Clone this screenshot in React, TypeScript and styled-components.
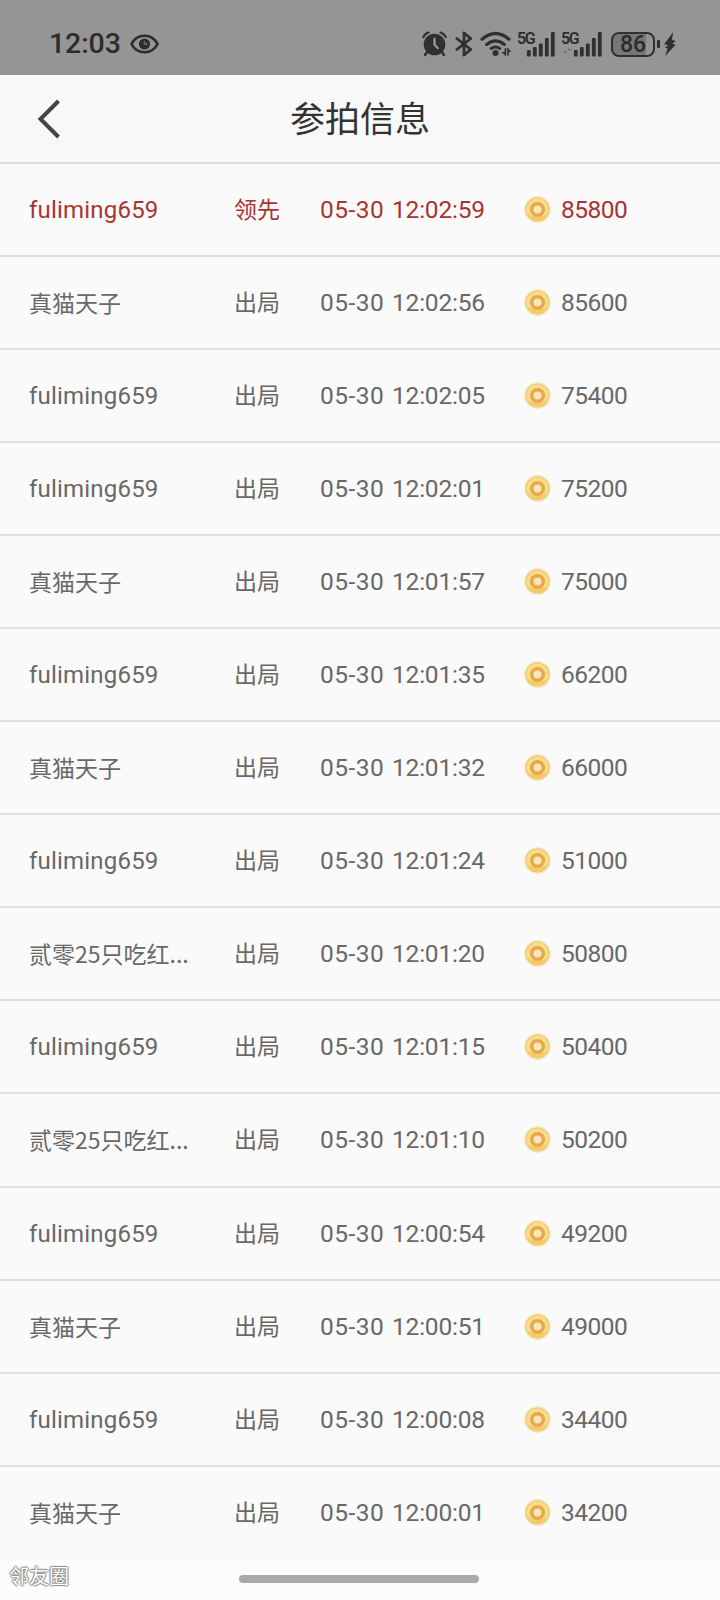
import React from 'react';
import styled, { createGlobalStyle } from 'styled-components';

const GlobalStyle = createGlobalStyle`
  * { box-sizing: border-box; }
  body {
    margin: 0;
    background: #fbfbfb;
    font-family: Roboto, "Noto Sans CJK SC", sans-serif;
  }
`;

const Screen = styled.div`
  width: 720px;
  height: 1600px;
  display: flex;
  flex-direction: column;
  background: #fafafa;
  overflow: hidden;
`;

const StatusBar = styled.header`
  height: 75.4px;
  flex: none;
  display: flex;
  align-items: center;
  padding: 13px 44px 0 49px;
  background: #959595;
  color: #2c2c2c;
`;

const Clock = styled.span`
  width: 81px;
  font-size: 28.5px;
  line-height: 34px;
  font-weight: 500;
  letter-spacing: -0.1px;
  white-space: nowrap;
`;

const StatusIcons = styled.div`
  display: flex;
  align-items: center;
  margin-left: auto;
`;

const Glyph = styled.svg<{ $gap?: number }>`
  display: block;
  flex: none;
  margin-left: ${(p) => p.$gap ?? 0}px;
`;

const Signal = styled.div<{ $gap: number }>`
  position: relative;
  width: 40px;
  height: 30px;
  margin-left: ${(p) => p.$gap}px;
`;

const SignalLabel = styled.span`
  position: absolute;
  left: -1px;
  top: 2px;
  font-size: 16px;
  line-height: 15px;
  font-weight: 600;
  letter-spacing: -1.4px;
`;

const Battery = styled.div`
  width: 44px;
  height: 25px;
  margin-left: 9px;
  border: 2px solid #303030;
  border-radius: 8px;
  background: linear-gradient(90deg, #777 82%, #959595 82%);
  font-size: 23px;
  line-height: 22px;
  font-weight: 500;
  letter-spacing: 0;
  text-align: center;
`;

const BatteryTip = styled.i`
  width: 3px;
  height: 8px;
  margin-left: 2px;
  border-radius: 1px;
  background: #303030;
`;

const TitleBar = styled.nav`
  height: 88.6px;
  flex: none;
  display: grid;
  grid-template-columns: 100px 1fr 100px;
  align-items: center;
  background: #f8f8f8;
  border-bottom: 2px solid #dedede;
`;

const BackButton = styled.button`
  width: 60px;
  height: 60px;
  margin-left: 19px;
  padding: 0;
  border: 0;
  background: none;
  display: grid;
  place-items: center;
`;

const Title = styled.h1`
  margin: 0;
  padding-top: 5px;
  font-size: 35px;
  line-height: 50px;
  font-weight: 400;
  color: #333;
  text-align: center;
`;

const BidList = styled.ul`
  margin: 0;
  padding: 0;
  list-style: none;
  flex: none;
`;

const BidRow = styled.li<{ $leading: boolean }>`
  height: 93.06px;
  display: grid;
  grid-template-columns: 205px 86px 204px 1fr;
  align-items: center;
  padding: 1px 0 0 29px;
  font-size: 23px;
  line-height: 34px;
  white-space: nowrap;
  color: ${(p) => (p.$leading ? '#a83432' : '#686868')};
  border-bottom: 2px solid #e1e1e1;
  &:last-child { border-bottom-color: transparent; }
`;

const Bidder = styled.span<{ $latin: boolean }>`
  font-family: ${(p) => (p.$latin ? 'Roboto' : '"Noto Sans CJK SC"')}, sans-serif;
  font-size: ${(p) => (p.$latin ? 24 : 23)}px;
  line-height: ${(p) => (p.$latin ? 34 : 32)}px;
  padding-bottom: ${(p) => (p.$latin ? 0 : 2)}px;
  letter-spacing: ${(p) => (p.$latin ? 0.2 : 0)}px;
`;

const Status = styled.span`
  padding-top: 2px;
`;

const When = styled.time`
  display: flex;
  font-size: 24.5px;
`;

const Day = styled.span`
  width: 72px;
  letter-spacing: 0.5px;
`;

const Hour = styled.span`
  letter-spacing: -0.2px;
`;

const Price = styled.span`
  display: flex;
  align-items: center;
  gap: 9px;
  font-size: 24.5px;
  letter-spacing: -0.5px;
`;

const Footer = styled.footer`
  flex: 1;
  display: grid;
  grid-template-columns: 239px 240px 1fr;
  align-items: center;
  background: #fcfcfc;
`;

const Watermark = styled.span`
  padding: 0 0 6px 9px;
  font-size: 20px;
  line-height: 28px;
  color: #fff;
  text-shadow: 1px 0 1px #888, -1px 0 1px #888, 0 1px 1px #888, 0 -1px 1px #888;
`;

const HomeIndicator = styled.div`
  height: 8px;
  margin-bottom: 2px;
  border-radius: 4px;
  background: #a9a9a9;
`;

const Coin = () => (
  <Glyph width="28" height="28" viewBox="0 0 28 28">
    <circle cx="13.5" cy="13.5" r="13.4" fill="#f8e8b8" />
    <circle cx="13.5" cy="13.5" r="12" fill="#dfc684" />
    <circle cx="13.5" cy="13.5" r="11" fill="#fbdc88" />
    <path d="M3.5 17a10.5 10.5 0 0 0 20 0c-4 5-16 5-20 0Z" fill="#f6c964" />
    <circle cx="13.5" cy="13.5" r="7.6" fill="#e5a84b" />
    <circle cx="13.5" cy="13.5" r="4.1" fill="#fae6bc" stroke="#efc177" strokeWidth="1" />
  </Glyph>
);

const Eye = () => (
  <Glyph width="30" height="20" viewBox="0 0 30 20" fill="none">
    <path d="M1.5 10C7-1 22-1 27.5 10C22 21 7 21 1.5 10Z" stroke="#2c2c2c" strokeWidth="2.6" />
    <circle cx="14.5" cy="10" r="5.6" fill="#2c2c2c" />
    <path d="M15.4 7.2a1.6 1.6 0 1 0 1.8 1.9" stroke="#858585" strokeWidth="1.1" />
  </Glyph>
);

const Alarm = () => (
  <Glyph width="26" height="26" viewBox="0 0 26 26" fill="none" stroke="#303030" strokeLinecap="round">
    <circle cx="12.5" cy="13.5" r="10.8" fill="#303030" stroke="none" />
    <path d="M1.3 6.2Q2.8 2.5 6.5 1.5M18.5 1.5Q22.2 2.5 23.7 6.2" strokeWidth="2.2" />
    <path d="m5 21-2 3M20 21l2 3" strokeWidth="2.4" />
    <path d="M12.5 7.5v6.2l3.2 3.5" stroke="#a5a5a5" strokeWidth="2" />
  </Glyph>
);

const Bluetooth = () => (
  <Glyph $gap={7} width="18" height="26" viewBox="0 0 18 26" fill="none" stroke="#303030" strokeWidth="2.8" strokeLinejoin="round" strokeLinecap="round">
    <path d="m1.8 7.5 14 11L9 24V2l6.8 5.5-14 11" />
  </Glyph>
);

const Wifi = () => (
  <Glyph $gap={7} width="32" height="26" viewBox="0 0 32 26" fill="none" stroke="#303030" strokeLinecap="round">
    <path d="M2 8.2Q15.5-3.2 29 8.2" strokeWidth="3.2" />
    <path d="M6.7 13.4Q15.5 6.4 24.3 13.4" strokeWidth="3.2" />
    <path d="M11.2 17.5q4.3-3 8.6 0" strokeWidth="3" />
    <circle cx="15.5" cy="22" r="3" fill="#303030" stroke="none" />
    <path d="M25.4 17.5v7l-4-3.4h4zM27.6 24.5v-7l4 3.4h-4z" fill="#303030" stroke="none" />
    <path d="M25.4 17.8v6.2M28 17.8v6.2" strokeWidth="1.6" />
  </Glyph>
);

const Bars = ({ idle }: { idle?: boolean }) => (
  <Glyph width="40" height="30" viewBox="0 0 40 30" fill="#303030">
    {idle && <path d="M4.4 18.5v7L.4 22.2h4zM6.4 25.5v-7l4 3.3h-4z" fill="#777" />}
    <g transform={idle ? undefined : 'translate(-3 0)'}>
      <rect x="11.9" y="21" width="3.8" height="6.6" rx="1" />
      <rect x="17.9" y="18" width="3.8" height="9.6" rx="1" />
      <rect x="23.9" y="14.5" width="3.8" height="13.1" rx="1" />
      <rect x="29.9" y="9" width="3.8" height="18.6" rx="1" />
      <rect x="35.9" y="3" width="3.8" height="24.6" rx="1" />
    </g>
  </Glyph>
);

const Bolt = () => (
  <Glyph $gap={4} width="12" height="26" viewBox="0 0 12 26" fill="#303030">
    <path d="M9.2 1 .2 13.2l4.3 1-3.6 2 2.6 1.4L1.2 25 11.6 13.8l-3.4-1.4 3.5-2.2-3.8-1.4Z" />
  </Glyph>
);

const CAT = '真猫天子';
const FLM = 'fuliming659';
const RED = '贰零25只吃红...';

const bids: [string, string, number][] = [
  [FLM, '12:02:59', 85800],
  [CAT, '12:02:56', 85600],
  [FLM, '12:02:05', 75400],
  [FLM, '12:02:01', 75200],
  [CAT, '12:01:57', 75000],
  [FLM, '12:01:35', 66200],
  [CAT, '12:01:32', 66000],
  [FLM, '12:01:24', 51000],
  [RED, '12:01:20', 50800],
  [FLM, '12:01:15', 50400],
  [RED, '12:01:10', 50200],
  [FLM, '12:00:54', 49200],
  [CAT, '12:00:51', 49000],
  [FLM, '12:00:08', 34400],
  [CAT, '12:00:01', 34200],
];

export default function App() {
  return (
    <Screen>
      <GlobalStyle />
      <StatusBar>
        <Clock>12:03</Clock>
        <Eye />
        <StatusIcons>
          <Alarm />
          <Bluetooth />
          <Wifi />
          <Signal $gap={6}><SignalLabel>5G</SignalLabel><Bars /></Signal>
          <Signal $gap={4}><SignalLabel>5G</SignalLabel><Bars idle /></Signal>
          <Battery>86</Battery>
          <BatteryTip />
          <Bolt />
        </StatusIcons>
      </StatusBar>
      <TitleBar>
        <BackButton aria-label="返回">
          <svg width="24" height="40" viewBox="0 0 24 40" fill="none" stroke="#444" strokeWidth="4">
            <path d="M21.5 2 3.5 20l18 18" />
          </svg>
        </BackButton>
        <Title>参拍信息</Title>
      </TitleBar>
      <BidList>
        {bids.map(([name, time, price], i) => (
          <BidRow key={time} $leading={i === 0}>
            <Bidder $latin={name === FLM}>{name}</Bidder>
            <Status>{i === 0 ? '领先' : '出局'}</Status>
            <When><Day>05-30</Day><Hour>{time}</Hour></When>
            <Price><Coin />{price}</Price>
          </BidRow>
        ))}
      </BidList>
      <Footer>
        <Watermark>邻友圈</Watermark>
        <HomeIndicator />
      </Footer>
    </Screen>
  );
}
